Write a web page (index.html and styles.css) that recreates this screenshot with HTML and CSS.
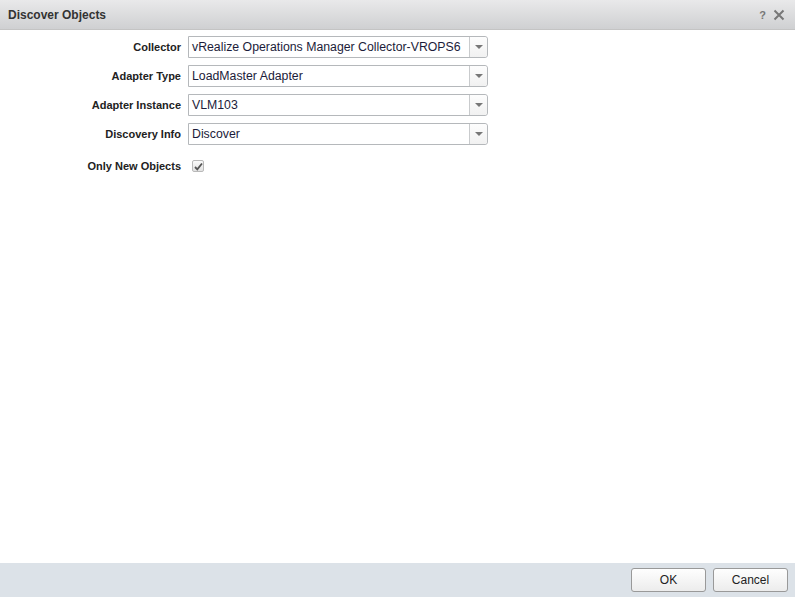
FILE: index.html
```html
<!DOCTYPE html>
<html lang="en">
<head>
    <meta charset="UTF-8" />
    <title>Discover Objects</title>
    <link rel="stylesheet" href="styles.css">
</head>
<body>
    <div class="dialog">
        <header class="titlebar">
            <div class="title">Discover Objects</div>
            <div class="tools">
                <span class="help">?</span>
                <svg class="close" width="12" height="12" viewBox="0 0 12 12">
                    <path d="M1.5 1.5 L10.5 10.5 M10.5 1.5 L1.5 10.5" stroke="#777" stroke-width="2" fill="none"/>
                </svg>
            </div>
        </header>

        <main class="form">
            <div class="row">
                <label>Collector</label>
                <div class="combo">
                    <span class="value">vRealize Operations Manager Collector-VROPS6</span>
                    <span class="trigger"></span>
                </div>
            </div>
            <div class="row">
                <label>Adapter Type</label>
                <div class="combo">
                    <span class="value">LoadMaster Adapter</span>
                    <span class="trigger"></span>
                </div>
            </div>
            <div class="row">
                <label>Adapter Instance</label>
                <div class="combo">
                    <span class="value">VLM103</span>
                    <span class="trigger"></span>
                </div>
            </div>
            <div class="row">
                <label>Discovery Info</label>
                <div class="combo">
                    <span class="value">Discover</span>
                    <span class="trigger"></span>
                </div>
            </div>
            <div class="row check-row">
                <label>Only New Objects</label>
                <span class="checkbox">
                    <svg width="9" height="9" viewBox="0 0 9 9">
                        <path d="M1 5 L3.3 7.3 L8 1.5" stroke="#555" stroke-width="1.8" fill="none"/>
                    </svg>
                </span>
            </div>
        </main>

        <footer class="buttons">
            <button class="btn">OK</button>
            <button class="btn">Cancel</button>
        </footer>
    </div>
</body>
</html>
```

FILE: styles.css
```css
html, body {
    margin: 0;
    height: 100%;
}

body {
    font-family: "Liberation Sans", Arial, sans-serif;
    color: #222;
    background: #fff;
}

.dialog {
    display: flex;
    flex-direction: column;
    height: 597px;
}

.titlebar {
    display: flex;
    justify-content: space-between;
    align-items: center;
    height: 29px;
    padding: 0 10px 0 8px;
    background: linear-gradient(#e9e9ea, #cfd0d2);
    border-bottom: 1px solid #c4c4c4;
}

.title {
    font-size: 12px;
    font-weight: bold;
    color: #333;
}

.tools {
    display: flex;
    align-items: center;
    gap: 7px;
}

.help {
    font-size: 11px;
    font-weight: bold;
    color: #777;
    margin-top: 1px;
}

.close {
    display: block;
}

.form {
    flex: 1;
    display: flex;
    flex-direction: column;
    gap: 7px;
    padding-top: 6px;
}

.row {
    display: flex;
    align-items: center;
    height: 22px;
}

.row label {
    width: 188px;
    text-align: right;
    font-size: 11px;
    font-weight: bold;
    color: #222;
    padding-right: 7px;
    box-sizing: border-box;
}

.combo {
    display: flex;
    width: 300px;
    height: 22px;
    box-sizing: border-box;
    border: 1px solid #b5b8bb;
    border-radius: 0 3px 3px 0;
    background: #fff;
}

.combo .value {
    flex: 1;
    font-size: 12.3px;
    line-height: 20px;
    padding-left: 3px;
    color: #1c1c3a;
    white-space: nowrap;
    overflow: hidden;
}

.combo .trigger {
    width: 17px;
    border-left: 1px solid #c9cbcd;
    background: linear-gradient(#fdfdfd, #f1f1f1);
    border-radius: 0 3px 3px 0;
    display: flex;
    align-items: center;
    justify-content: center;
}

.combo .trigger::after {
    content: "";
    border-left: 4px solid transparent;
    border-right: 4px solid transparent;
    border-top: 4px solid #777;
}

.check-row {
    margin-top: 3px;
}

.check-row label {
    width: 192px;
    padding-right: 11px;
}

.checkbox {
    width: 10px;
    height: 10px;
    border: 1px solid #b9b9b9;
    border-radius: 2px;
    background: linear-gradient(#fafafa, #e2e2e2);
    display: flex;
    align-items: center;
    justify-content: center;
}

.checkbox svg {
    display: block;
}

.buttons {
    display: flex;
    justify-content: flex-end;
    align-items: center;
    gap: 7px;
    height: 34px;
    padding-right: 7px;
    background: #dce2e8;
}

.btn {
    height: 24px;
    width: 75px;
    font-family: "Liberation Sans", Arial, sans-serif;
    font-size: 12px;
    color: #222;
    border: 1px solid #999;
    border-radius: 3px;
    background: linear-gradient(#fefefe, #ececec);
    padding: 0;
}
```
